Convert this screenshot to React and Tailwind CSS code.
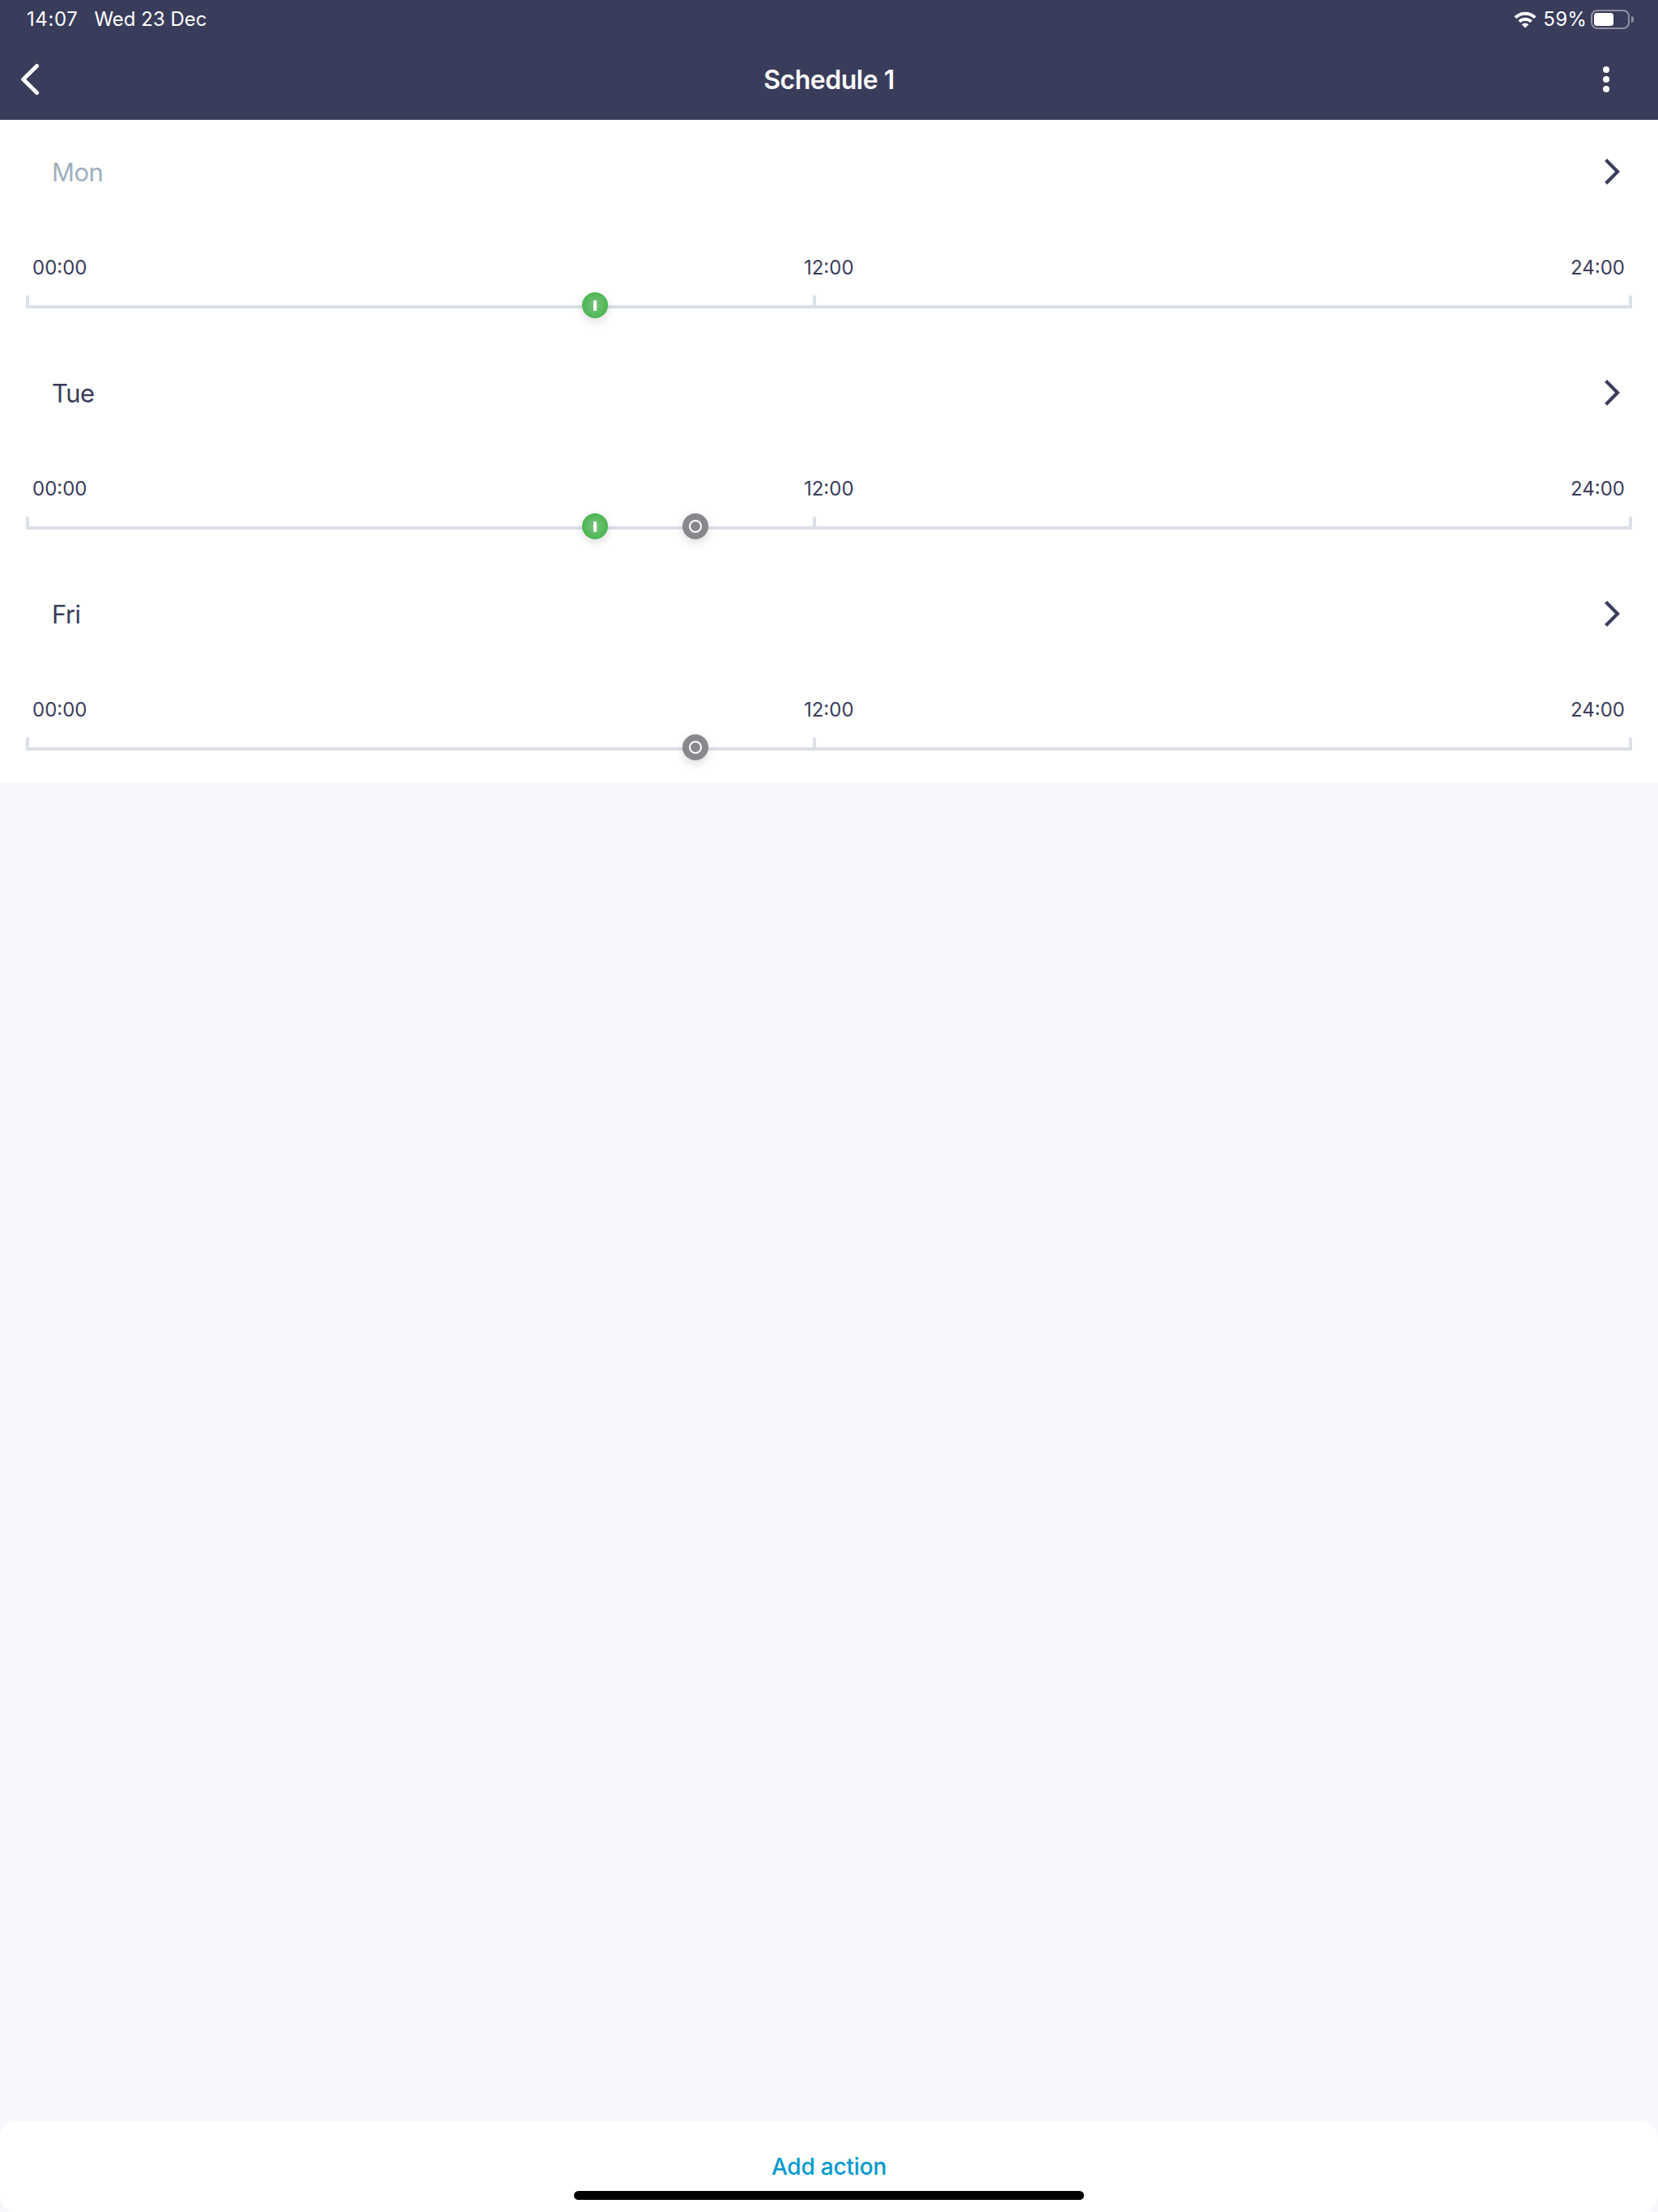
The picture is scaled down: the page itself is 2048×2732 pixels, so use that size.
import React from "react";
import clsx from "clsx";

const days = [
    { name: "Mon", muted: true, actions: [{ type: "on", left: 687 }] },
    { name: "Tue", actions: [{ type: "on", left: 687 }, { type: "off", left: 811 }] },
    { name: "Fri", actions: [{ type: "off", left: 811 }] },
];

const WifiIcon = () => (
    <svg width="28" height="21" viewBox="0 0 28 21" fill="none" stroke="#fff" strokeWidth="4">
        <path d="M1.8 7.7a17.3 17.3 0 0 1 24.4 0" />
        <path d="M6.6 12.7a10.5 10.5 0 0 1 14.8 0" />
        <path d="M14 20.4l-4.3-4.2a6.2 6.2 0 0 1 8.6 0z" fill="#fff" stroke="none" />
    </svg>
);

const Battery = () => (
    <div className="flex items-center gap-[2px]">
        <div className="w-12 h-6 p-[2px] border-2 border-[#8f91a3] rounded-[8px]">
            <div className="w-6 h-4 bg-white rounded-[3.5px]" />
        </div>
        <div className="w-[3px] h-2 bg-[#8f91a3] rounded-r-full" />
    </div>
);

const Header = () => (
    <header className="h-[148px] bg-[#3a3c5b] text-white">
        <div className="flex items-start justify-between h-12 pl-[33px] pr-[30px] text-[24px] leading-[48px]">
            <div className="flex gap-[20px]">
                <span className="tracking-[0.6px]">14:07</span>
                <span>Wed 23 Dec</span>
            </div>
            <div className="flex items-center h-12">
                <WifiIcon />
                <span className="ml-2 mr-[5px] tracking-[0.2px]">59%</span>
                <Battery />
            </div>
        </div>
        <div className="grid grid-cols-3 items-center h-[100px] px-6">
            <button aria-label="Back" className="justify-self-start">
                <svg width="26" height="40" viewBox="0 0 26 40" fill="none" stroke="#fff" strokeWidth="5" strokeLinecap="round" strokeLinejoin="round">
                    <path d="M21.5 3.5L4.7 20l16.8 16.5" />
                </svg>
            </button>
            <h1 className="justify-self-center pt-[2px] text-[32px] leading-[40px] font-semibold tracking-[-0.5px]">Schedule 1</h1>
            <button aria-label="More" className="justify-self-end mr-9">
                <svg width="8" height="32" viewBox="0 0 8 32" fill="#fff">
                    <circle cx="4" cy="4" r="4" />
                    <circle cx="4" cy="16" r="4" />
                    <circle cx="4" cy="28" r="4" />
                </svg>
            </button>
        </div>
    </header>
);

const Marker = ({ type, left }) => (
    <div
        className={clsx(
            "absolute top-[-4px] flex items-center justify-center size-8 rounded-full shadow-[0_4px_12px_rgba(0,0,0,0.14)]",
            type === "on" ? "bg-[radial-gradient(circle,#7cc47e_0%,#47b450_75%)]" : "bg-[#88878c]"
        )}
        style={{ left }}
    >
        {type === "on" ? (
            <div className="w-1 h-[13px] bg-white rounded-[1px]" />
        ) : (
            <div className="size-4 border-2 border-white rounded-full" />
        )}
    </div>
);

const DayRow = ({ name, muted, actions }) => (
    <section className="h-[273px] px-8">
        <div className="flex items-center justify-between h-32 pl-8 pr-3">
            <h2 className={clsx("pt-[2px] text-[31px] leading-[40px] tracking-[-0.5px]", muted && "text-[#9fafbd]")}>
                {name}
            </h2>
            <svg width="24" height="36" viewBox="0 0 24 36" fill="none" stroke="#3a3c5b" strokeWidth="4.2">
                <path d="M3.6 3.6L18 18 3.6 32.4" />
            </svg>
        </div>
        <div className="flex justify-between h-[89px] pl-2 pr-[9px] pt-10 text-[24px] leading-[30px]">
            <span>00:00</span>
            <span>12:00</span>
            <span>24:00</span>
        </div>
        <div className="relative flex justify-between h-4 border-b-4 border-[#dce0e8]">
            <div className="w-1 bg-[#dce0e8]" />
            <div className="w-1 bg-[#dce0e8] mr-9" />
            <div className="w-1 bg-[#dce0e8]" />
            {actions.map((action) => (
                <Marker key={action.left} {...action} />
            ))}
        </div>
    </section>
);

const App = () => {
    return (
        <div className="flex flex-col w-[2048px] h-[2732px] bg-[#f7f8fc] text-[#3a3c5b] font-['Inter',sans-serif]">
            <Header />
            <main className="bg-white">
                {days.map((day) => (
                    <DayRow key={day.name} {...day} />
                ))}
            </main>
            <footer className="flex flex-col items-center justify-between h-28 mt-auto pt-9 pb-[15px] bg-white rounded-[20px]">
                <button className="text-[28px] leading-[40px] font-medium tracking-[-0.2px] text-[#0099cc]">Add action</button>
                <div className="w-[630px] h-[11px] bg-black rounded-full" />
            </footer>
        </div>
    );
};

export default App;
